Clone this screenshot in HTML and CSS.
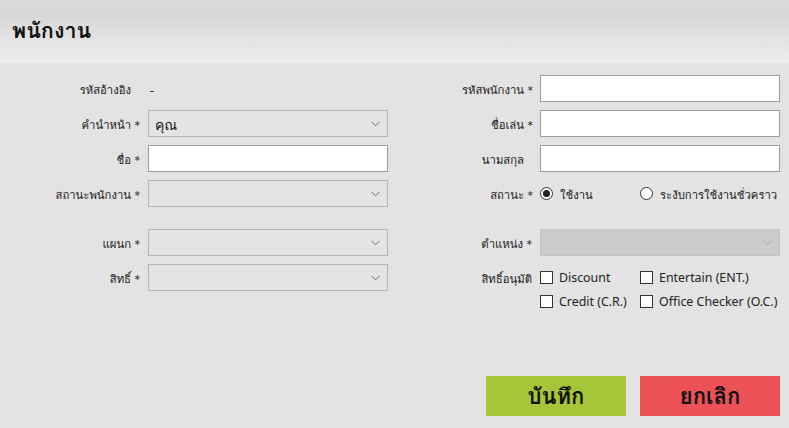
FILE: index.html
```html
<!DOCTYPE html>
<html lang="th">
<head>
<meta charset="utf-8">
<title>พนักงาน</title>
<link rel="stylesheet" href="styles.css">
</head>
<body>
<header class="header"><h1 class="title">พนักงาน</h1></header>
<main class="form">
  <label class="lbl">รหัสอ้างอิง<span class="req ghost"> *</span></label>
  <div class="value">-</div>
  <label class="lbl">รหัสพนักงาน<span class="req"> *</span></label>
  <input class="input" type="text">

  <label class="lbl">คำนำหน้า<span class="req"> *</span></label>
  <div class="select"><span class="sel-text">คุณ</span><svg class="chev" width="9" height="6" viewBox="0 0 9 6"><path d="M0.5 0.8 L4.5 4.8 L8.5 0.8" fill="none" stroke="#6a6a6a" stroke-width="1"/></svg></div>
  <label class="lbl">ชื่อเล่น<span class="req"> *</span></label>
  <input class="input" type="text">

  <label class="lbl">ชื่อ<span class="req"> *</span></label>
  <input class="input" type="text">
  <label class="lbl">นามสกุล<span class="req ghost"> *</span></label>
  <input class="input" type="text">

  <label class="lbl">สถานะพนักงาน<span class="req"> *</span></label>
  <div class="select"><span class="sel-text"></span><svg class="chev" width="9" height="6" viewBox="0 0 9 6"><path d="M0.5 0.8 L4.5 4.8 L8.5 0.8" fill="none" stroke="#6a6a6a" stroke-width="1"/></svg></div>
  <label class="lbl">สถานะ<span class="req"> *</span></label>
  <div class="options">
    <span class="opt"><span class="radio on"></span><span class="opt-text">ใช้งาน</span></span>
    <span class="opt"><span class="radio"></span><span class="opt-text">ระงับการใช้งานชั่วคราว</span></span>
  </div>

  <div class="spacer"></div>

  <label class="lbl">แผนก<span class="req"> *</span></label>
  <div class="select"><span class="sel-text"></span><svg class="chev" width="9" height="6" viewBox="0 0 9 6"><path d="M0.5 0.8 L4.5 4.8 L8.5 0.8" fill="none" stroke="#6a6a6a" stroke-width="1"/></svg></div>
  <label class="lbl">ตำแหน่ง<span class="req"> *</span></label>
  <div class="select disabled"><span class="sel-text"></span><svg class="chev" width="9" height="6" viewBox="0 0 9 6"><path d="M0.5 0.8 L4.5 4.8 L8.5 0.8" fill="none" stroke="#a8a8a8" stroke-width="1"/></svg></div>

  <label class="lbl">สิทธิ์<span class="req"> *</span></label>
  <div class="select"><span class="sel-text"></span><svg class="chev" width="9" height="6" viewBox="0 0 9 6"><path d="M0.5 0.8 L4.5 4.8 L8.5 0.8" fill="none" stroke="#6a6a6a" stroke-width="1"/></svg></div>
  <label class="lbl">สิทธิ์อนุมัติ</label>
  <div class="checks">
    <span class="opt"><span class="box"></span><span class="opt-text latin">Discount</span></span>
    <span class="opt"><span class="box"></span><span class="opt-text latin">Entertain (ENT.)</span></span>
    <span class="opt"><span class="box"></span><span class="opt-text latin">Credit (C.R.)</span></span>
    <span class="opt"><span class="box"></span><span class="opt-text latin">Office Checker (O.C.)</span></span>
  </div>
</main>
<footer class="actions">
  <button class="btn save" type="button">บันทึก</button>
  <button class="btn cancel" type="button">ยกเลิก</button>
</footer>
</body>
</html>
```
FILE: styles.css
```css
html, body {
  margin: 0;
  padding: 0;
}
body {
  width: 789px;
  height: 428px;
  overflow: hidden;
  background: #e3e3e3;
  color: #1a1a1a;
  font-family: Tahoma, Loma, Waree, Garuda, "Noto Sans Thai Looped", "Noto Sans Thai", "Noto Sans", "Liberation Sans", sans-serif;
  font-size: 11.3px;
  display: flex;
  flex-direction: column;
  box-sizing: border-box;
}
.header {
  height: 63px;
  flex: none;
  display: flex;
  align-items: center;
  padding-left: 12px;
  background: linear-gradient(#dcdcdc 0%, #d7d7d7 25%, #e4e4e4 65%, #ececec 100%);
}
.title {
  margin: 0;
  font-size: 21.5px;
  font-weight: bold;
  color: #111;
  line-height: 1;
  padding-bottom: 2px;
}
.form {
  display: grid;
  grid-template-columns: 148px 240px 152px 240px;
  row-gap: 8px;
  padding-top: 12px;
  align-items: start;
}
.lbl {
  text-align: right;
  padding-right: 8px;
  padding-top: 3px;
  line-height: 24px;
  height: 24px;
  white-space: nowrap;
}
.lbl:nth-child(4n+3) { padding-right: 7px; }
.req {
  font-family: "DejaVu Sans", "Liberation Sans", sans-serif;
  font-size: 11px;
}
.ghost { visibility: hidden; }
.value {
  line-height: 24px;
  padding-top: 3px;
  padding-left: 2px;
}
.input {
  box-sizing: border-box;
  height: 27px;
  width: 240px;
  margin: 0;
  border: 1px solid #9c9c9c;
  background: #fff;
  padding: 0 4px;
  font: inherit;
}
.select {
  box-sizing: border-box;
  height: 27px;
  width: 240px;
  border: 1px solid #b4b4b4;
  background: #e4e4e4;
  display: flex;
  align-items: center;
  justify-content: space-between;
  padding: 0 6px 0 6px;
}
.sel-text {
  font-size: 14px;
  color: #111;
  padding-top: 2px;
}
.chev { flex: none; margin-right: 1px; }
.select.disabled {
  background: #cbcbcb;
  border-color: #c4c4c4;
}
.spacer {
  grid-column: 1 / -1;
  height: 6px;
}
.options {
  display: flex;
  height: 27px;
  align-items: center;
}
.options .opt:first-child { width: 100px; }
.options .opt-text { padding-top: 2px; }
.opt {
  display: flex;
  align-items: center;
  white-space: nowrap;
}
.radio {
  box-sizing: border-box;
  width: 13px;
  height: 13px;
  border: 1px solid #333;
  border-radius: 50%;
  background: #fff;
  display: flex;
  align-items: center;
  justify-content: center;
}
.radio.on::after {
  content: "";
  width: 7px;
  height: 7px;
  border-radius: 50%;
  background: #222;
}
.opt-text { margin-left: 7px; }
.checks {
  display: grid;
  grid-template-columns: 100px auto;
  grid-auto-rows: 24px;
  align-items: center;
  padding-top: 1px;
}
.box {
  box-sizing: border-box;
  width: 13px;
  height: 13px;
  border: 1px solid #333;
  background: #fff;
  flex: none;
}
.latin {
  font-family: "Noto Sans", "Open Sans", sans-serif;
  font-size: 12.4px;
  margin-left: 6px;
  color: #222;
}
.actions {
  margin-top: auto;
  display: flex;
  justify-content: flex-end;
  gap: 14px;
  padding: 0 9px 12px 0;
}
.btn {
  width: 140px;
  height: 40px;
  border: none;
  margin: 0;
  font-family: inherit;
  font-size: 22px;
  font-weight: bold;
  color: #111;
  cursor: pointer;
}
.save { background: #a7c637; }
.cancel { background: #eb5157; }
```
